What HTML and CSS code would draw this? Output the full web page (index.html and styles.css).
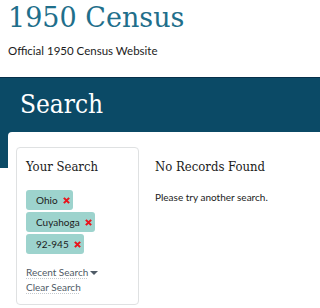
FILE: index.html
```html
<!DOCTYPE html>
<html lang="en">
<head>
    <meta charset="UTF-8">
    <meta name="viewport" content="width=device-width, initial-scale=1.0">
    <title>1950 Census - Search</title>
    <link rel="stylesheet" href="styles.css">
</head>
<body>
    <header class="site-header">
        <div class="site-title">1950 Census</div>
        <div class="site-subtitle">Official 1950 Census Website</div>
    </header>

    <section class="band">
        <h1>Search</h1>
    </section>

    <main class="main">
        <aside class="your-search">
            <h2>Your Search</h2>
            <div class="tags">
                <span class="tag">Ohio
                    <svg class="tag-x" viewBox="0 0 8 8"><path d="M1 1L7 7M7 1L1 7"/></svg>
                </span>
                <span class="tag">Cuyahoga
                    <svg class="tag-x" viewBox="0 0 8 8"><path d="M1 1L7 7M7 1L1 7"/></svg>
                </span>
                <span class="tag">92-945
                    <svg class="tag-x" viewBox="0 0 8 8"><path d="M1 1L7 7M7 1L1 7"/></svg>
                </span>
            </div>
            <div class="links">
                <a href="#" class="link">Recent Search</a> <span class="caret"></span><br>
                <a href="#" class="link">Clear Search</a>
            </div>
        </aside>

        <section class="results">
            <h2>No Records Found</h2>
            <p>Please try another search.</p>
        </section>
    </main>
</body>
</html>
```

FILE: styles.css
```css
* {
    margin: 0;
    padding: 0;
    box-sizing: border-box;
}

body {
    font-family: Lato, "Open Sans", sans-serif;
    background: #fff;
    color: #1b1b1b;
    overflow: hidden;
}

.site-header {
    padding: 1px 8px 0 8px;
    height: 77px;
}

.site-title {
    font-family: "DejaVu Serif", serif;
    font-size: 27px;
    line-height: 34px;
    color: #1f6f8b;
}

.site-subtitle {
    font-size: 11.5px;
    line-height: 16px;
    margin-top: 8px;
    color: #1b1b1b;
}

.band {
    background: #0b4a66;
    border-top: 1px solid #06304a;
    padding: 9px 20px 0 20px;
    height: 91px;
}

.band h1 {
    font-family: "DejaVu Serif Condensed", "DejaVu Serif", serif;
    font-weight: normal;
    font-size: 26px;
    line-height: 34px;
    color: #fff;
}

.main {
    display: flex;
    gap: 16px;
    margin: -36px 0 0 8px;
    padding: 15px 8px 0 8px;
    background: #fff;
    border-radius: 4px 0 0 0;
    position: relative;
}

.your-search {
    width: 123px;
    height: 158px;
    border: 1px solid #dfe1e2;
    border-radius: 4px;
    padding: 10px 9px;
    flex-shrink: 0;
}

.your-search h2,
.results h2 {
    font-family: "DejaVu Serif Condensed", "DejaVu Serif", serif;
    font-weight: normal;
    font-size: 13px;
    line-height: 18px;
    color: #1b1b1b;
}

.tags {
    display: flex;
    flex-direction: column;
    align-items: flex-start;
    gap: 2px;
    margin-top: 14px;
}

.tag {
    display: flex;
    align-items: center;
    gap: 5px;
    background: #9dd3cd;
    border-radius: 3px;
    font-size: 10px;
    height: 20px;
    padding: 0 3px 0 10px;
    color: #1b1b1b;
}

.tag-x {
    width: 7px;
    height: 7px;
    stroke: #e8141b;
    stroke-width: 2.4;
    fill: none;
}

.links {
    margin-top: 11px;
    font-size: 10px;
    line-height: 15px;
}

.link {
    color: #4f5b66;
    text-decoration: underline dotted #c4c9ce;
    text-underline-offset: 2px;
}

.caret {
    display: inline-block;
    width: 0;
    height: 0;
    border-left: 4px solid transparent;
    border-right: 4px solid transparent;
    border-top: 4px solid #4f5b66;
    vertical-align: middle;
    margin-left: -1px;
}

.results {
    padding-top: 11px;
}

.results p {
    font-size: 10px;
    line-height: 14px;
    margin-top: 14px;
    color: #1b1b1b;
}
```
